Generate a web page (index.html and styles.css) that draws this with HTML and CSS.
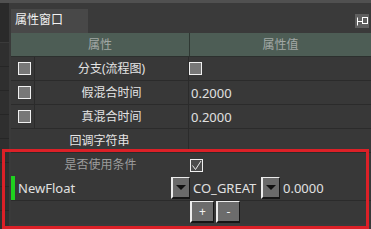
FILE: index.html
```html
<!DOCTYPE html>
<html>
<head>
<meta charset="utf-8">
<link rel="stylesheet" href="styles.css">
</head>
<body>
<div class="topbar"></div>
<div class="main">
  <div class="side">
    <div class="side-top"></div>
    <div class="side-row"></div>
    <div class="side-row"></div>
    <div class="side-row"></div>
    <div class="side-row"></div>
    <div class="side-row"></div>
    <div class="side-row"></div>
    <div class="side-row"></div>
  </div>
  <div class="panel">
    <div class="tabbar">
      <div class="tab">属性窗口</div>
      <div class="pin">
        <svg width="14" height="14" viewBox="0 0 14 14">
          <path d="M2.5 3.5 V11.5 M2 7.5 H7.5" stroke="#fff" stroke-width="1" fill="none"/>
          <rect x="7.5" y="3.5" width="5" height="6" stroke="#fff" stroke-width="1" fill="none"/>
        </svg>
      </div>
    </div>
    <div class="header">
      <div class="hcell hname">属性</div>
      <div class="hcell">属性值</div>
    </div>
    <div class="row">
      <div class="ccell"><span class="cb"></span></div>
      <div class="ncell">分支(流程图)</div>
      <div class="vcell"><span class="cb"></span></div>
    </div>
    <div class="row">
      <div class="ccell"><span class="cb"></span></div>
      <div class="ncell">假混合时间</div>
      <div class="vcell"><span class="num">0.2000</span></div>
    </div>
    <div class="row">
      <div class="ccell"><span class="cb"></span></div>
      <div class="ncell">真混合时间</div>
      <div class="vcell"><span class="num">0.2000</span></div>
    </div>
    <div class="row">
      <div class="ncell wide">回调字符串</div>
      <div class="vcell"></div>
    </div>
    <div class="cond-row">
      <div class="ncell dim">是否使用条件</div>
      <div class="vcell top">
        <span class="cb checked">
          <svg width="11" height="11" viewBox="0 0 11 11"><polyline points="1.5,5.5 4.5,9.5 10,1" stroke="#e8e8e8" stroke-width="1" fill="none"/></svg>
        </span>
      </div>
    </div>
    <div class="float-row">
      <div class="fname">
        <span class="greenbar"></span>
        <span class="latin">NewFloat</span>
        <span class="spacer"></span>
        <span class="drop"><span class="tri"></span></span>
      </div>
      <div class="fvalue">
        <span class="latin op">CO_GREAT</span>
        <span class="drop"><span class="tri"></span></span>
        <span class="latin val">0.0000</span>
      </div>
    </div>
    <div class="btn-row">
      <span class="btn">+</span>
      <span class="btn">-</span>
    </div>
  </div>
</div>
<div class="highlight"></div>
</body>
</html>
```
FILE: styles.css
```css
html, body {
  margin: 0;
  padding: 0;
}
body {
  width: 371px;
  height: 229px;
  overflow: hidden;
  background: #3a3a3a;
  font-family: "Noto Sans", "Noto Sans CJK SC", sans-serif;
  position: relative;
}
.topbar {
  height: 3px;
  background: #505050;
}
.main {
  display: flex;
  height: 226px;
}
.side {
  width: 9px;
  background: #2f2f2f;
  display: flex;
  flex-direction: column;
}
.side-top {
  height: 39px;
  background: #2a2a2a;
  border-bottom: 1px solid #3a3a3a;
}
.side-row {
  height: 23px;
  border-bottom: 1px solid #262626;
}
.panel {
  flex: 1;
  margin-left: 2px;
  display: flex;
  flex-direction: column;
}
.tabbar {
  height: 30px;
  display: flex;
  justify-content: space-between;
  align-items: flex-start;
}
.tab {
  margin-top: 6px;
  width: 73px;
  height: 24px;
  padding-left: 4px;
  background: #484848;
  color: #f2f2f2;
  font-size: 12px;
  line-height: 22px;
}
.pin {
  margin-top: 11px;
  margin-right: 2px;
  width: 14px;
  height: 14px;
  background: #5e5e5e;
  display: flex;
}
.header {
  height: 23px;
  display: grid;
  grid-template-columns: 179px 1fr;
  background: #4d5d55;
  border-bottom: 1px solid #2c302e;
}
.hcell {
  color: #a2a8a5;
  font-size: 12px;
  line-height: 23px;
  text-align: center;
}
.hname {
  border-right: 1px solid #2f3833;
}
.row {
  height: 23px;
  display: grid;
  grid-template-columns: 24px 154px 1fr;
  border-bottom: 1px solid #2b2b2b;
  background: #383838;
}
.ccell {
  border-right: 1px solid #2b2b2b;
  display: flex;
  align-items: center;
  padding-left: 7px;
}
.ncell {
  border-right: 1px solid #2b2b2b;
  color: #e4e4e4;
  font-size: 12px;
  line-height: 23px;
  text-align: center;
}
.ncell.wide {
  grid-column: span 2;
}
.ncell.dim {
  color: #9c9c9c;
  border-right: none;
}
.vcell {
  display: flex;
  align-items: center;
}
.vcell.top {
  align-items: flex-start;
  padding-top: 6px;
}
.cb {
  width: 11px;
  height: 11px;
  border: 1px solid #f0f0f0;
  background: #787878;
  display: inline-flex;
}
.cb.checked {
  background: #4a4a4a;
}
.num {
  color: #e0e0e0;
  font-size: 13px;
  padding-left: 2px;
}
.cond-row {
  height: 23px;
  display: grid;
  grid-template-columns: 179px 1fr;
  background: #383838;
}
.float-row {
  height: 24px;
  display: flex;
  border-bottom: 1px solid #2b2b2b;
  background: #383838;
}
.fname {
  width: 179px;
  display: flex;
  align-items: center;
}
.greenbar {
  width: 4px;
  height: 24px;
  background: #1fd11f;
}
.latin {
  color: #e0e0e0;
  font-size: 13px;
}
.fname .latin {
  margin-left: 3px;
}
.spacer {
  flex: 1;
}
.drop {
  width: 16px;
  height: 19px;
  background: #6a6a6a;
  border-left: 2px solid #ececec;
  border-top: 1px solid #ececec;
  border-right: 1px solid #151515;
  border-bottom: 2px solid #151515;
  display: flex;
  align-items: center;
  justify-content: center;
  margin-right: 0;
}
.tri {
  width: 0;
  height: 0;
  border-left: 5px solid transparent;
  border-right: 5px solid transparent;
  border-top: 5px solid #111;
}
.fvalue {
  flex: 1;
  display: flex;
  align-items: center;
}
.op {
  margin-left: 3px;
  width: 64px;
  margin-right: 4px;
}
.val {
  margin-left: 3px;
}
.btn-row {
  height: 23px;
  display: flex;
  gap: 2px;
  padding-left: 179px;
  align-items: flex-start;
  background: #383838;
}
.btn {
  width: 21px;
  height: 19px;
  background: #6c6c6c;
  border-left: 2px solid #ececec;
  border-top: 1px solid #ececec;
  border-right: 1px solid #151515;
  border-bottom: 2px solid #151515;
  color: #f0f0f0;
  font-size: 12px;
  line-height: 19px;
  text-align: center;
}
.highlight {
  position: absolute;
  left: 2px;
  top: 149px;
  width: 361px;
  height: 74px;
  border: 3px solid #dc2027;
  pointer-events: none;
}
```
